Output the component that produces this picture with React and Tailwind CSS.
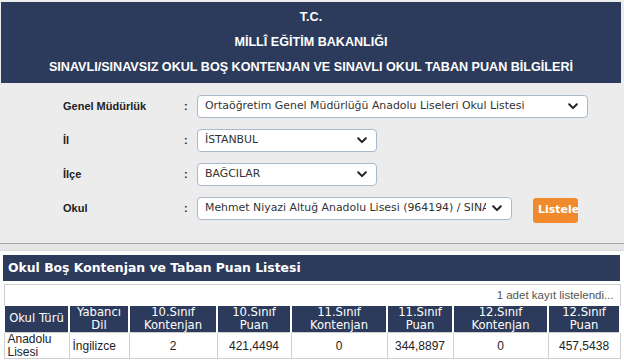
import React from 'react';

const FONT_ARIAL = { fontFamily: '"Liberation Sans", Arial, sans-serif' };
const FONT_VERDANA = { fontFamily: '"DejaVu Sans", Verdana, sans-serif' };

// Küçük ok işareti (select sağ tarafı)
function Chevron() {
  return (
    <svg width="10" height="7" viewBox="0 0 10 7" className="shrink-0">
      <path d="M1.2 1.3 L5 5.1 L8.8 1.3" fill="none" stroke="#222" strokeWidth="2" strokeLinecap="round" strokeLinejoin="round" />
    </svg>
  );
}

function Secim({ value, widthClass }) {
  return (
    <div
      className={`h-[23px] ${widthClass} flex items-center justify-between gap-[6px] pl-[7px] pr-[9px] bg-white border border-[#a9b9cc] rounded-[4px] text-[10.9px] text-[#333] overflow-hidden`}
      style={FONT_VERDANA}
    >
      <span className="whitespace-nowrap overflow-hidden">{value}</span>
      <Chevron />
    </div>
  );
}

function Satir({ label, children }) {
  return (
    <div className="flex items-center h-[23px]">
      <div className="w-[121px] pl-[63px] box-content text-[11px] font-bold text-[#222] whitespace-nowrap" style={FONT_ARIAL}>
        {label}
      </div>
      <div className="w-[13px] text-[11px] font-bold text-[#222]" style={FONT_ARIAL}>:</div>
      {children}
    </div>
  );
}

const basliklar = [
  ['Okul Türü', null],
  ['Yabancı', 'Dil'],
  ['10.Sınıf', 'Kontenjan'],
  ['10.Sınıf', 'Puan'],
  ['11.Sınıf', 'Kontenjan'],
  ['11.Sınıf', 'Puan'],
  ['12.Sınıf', 'Kontenjan'],
  ['12.Sınıf', 'Puan'],
];

const genislikler = ['w-[65px]', 'w-[60px]', 'w-[88px]', 'w-[74px]', 'w-[96px]', 'w-[66px]', 'w-[95px]', 'w-[72px]'];

const satir = ['2', '421,4494', '0', '344,8897', '0', '457,5438'];

export default function App() {
  return (
    <div className="w-[624px] h-[363px] overflow-hidden bg-[#ececec]">
      {/* Üst başlık */}
      <div
        className="ml-[1px] mr-[3px] mt-[2px] h-[81px] pt-[3px] bg-[#2c3b5b] flex flex-col items-center text-white text-[12.6px] font-bold leading-[25px]"
        style={FONT_ARIAL}
      >
        <div>T.C.</div>
        <div>MİLLÎ EĞİTİM BAKANLIĞI</div>
        <div>SINAVLI/SINAVSIZ OKUL BOŞ KONTENJAN VE SINAVLI OKUL TABAN PUAN BİLGİLERİ</div>
      </div>

      {/* Form */}
      <div className="mt-[12px] flex flex-col gap-[11px]">
        <Satir label="Genel Müdürlük">
          <Secim value="Ortaöğretim Genel Müdürlüğü Anadolu Liseleri Okul Listesi" widthClass="w-[391px]" />
        </Satir>
        <Satir label="İl">
          <Secim value="İSTANBUL" widthClass="w-[180px]" />
        </Satir>
        <Satir label="İlçe">
          <Secim value="BAĞCILAR" widthClass="w-[180px]" />
        </Satir>
        <Satir label="Okul">
          <Secim value="Mehmet Niyazi Altuğ Anadolu Lisesi (964194) / SINA" widthClass="w-[315px]" />
          <button
            className="ml-[21px] mt-[3px] w-[45px] h-[25px] rounded-[3px] bg-[#f08a2c] text-white text-[11px] font-bold pl-[5px] text-left overflow-hidden whitespace-nowrap"
            style={FONT_VERDANA}
          >
            Listele
          </button>
        </Satir>
      </div>

      {/* Ayırıcı */}
      <div className="mt-[23px] h-[8px] border-t border-[#a8a8a8] border-b border-b-[#d9d9d9] bg-[#e6e6e6]" />

      {/* Liste paneli */}
      <div className="bg-white h-[200px] pt-[4px] pl-[3px] pr-[4px]">
        <div className="h-[26px] bg-[#2c3b5b] pl-[5px] flex items-center text-white text-[12.4px] font-bold" style={FONT_VERDANA}>
          Okul Boş Kontenjan ve Taban Puan Listesi
        </div>
        <table className="mt-[3px] w-[616px] border-collapse border border-[#cfcfcf] table-fixed">
          <colgroup>
            {genislikler.map((w, i) => (
              <col key={i} className={w} />
            ))}
          </colgroup>
          <tbody>
            <tr className="h-[21px]">
              <td colSpan={8} className="text-right pr-[6px] text-[11.5px] text-[#555]" style={FONT_ARIAL}>
                1 adet kayıt listelendi...
              </td>
            </tr>
            <tr className="h-[27px] bg-[#2c3b5b]">
              {basliklar.map(([a, b], i) => (
                <th
                  key={i}
                  className="border-x-2 border-white text-white text-[11.6px] font-normal leading-[13px] text-center whitespace-nowrap"
                  style={FONT_VERDANA}
                >
                  {a}
                  {b && <br />}
                  {b}
                </th>
              ))}
            </tr>
            <tr className="h-[25px] text-[12px] text-[#222]" style={FONT_ARIAL}>
              <td className="border border-[#cfcfcf] pl-[3px] leading-[12.5px]">
                Anadolu
                <br />
                Lisesi
              </td>
              <td className="border border-[#cfcfcf] pl-[3px]">İngilizce</td>
              {satir.map((v, i) => (
                <td key={i} className="border border-[#cfcfcf] text-center">
                  {v}
                </td>
              ))}
            </tr>
          </tbody>
        </table>
      </div>
    </div>
  );
}
